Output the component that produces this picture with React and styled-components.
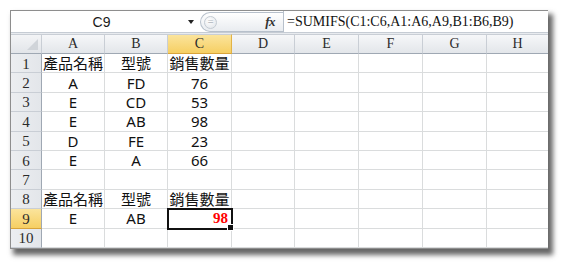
import React from "react";
import styled, { createGlobalStyle } from "styled-components";

const Global = createGlobalStyle`
  html, body { margin: 0; padding: 0; background: #ffffff; }
  #root { width: 567px; height: 268px; }
`;

const Page = styled.div`
  width: 567px;
  height: 268px;
  padding: 10px 0 0 10px;
  box-sizing: border-box;
`;

const Window = styled.div`
  width: 538px;
  height: 239px;
  box-sizing: border-box;
  border: 1px solid #8e8e8e;
  border-right: none;
  background: #ffffff;
  overflow: hidden;
  display: flex;
  flex-direction: column;
  box-shadow: 4px 5px 5px 1px rgba(0, 0, 0, 0.6);
`;

const FormulaBar = styled.div`
  height: 21px;
  display: flex;
  align-items: stretch;
  border-bottom: 1px solid #c6ccd4;
  flex: none;
`;

const NameBox = styled.div`
  width: 189px;
  position: relative;
  display: flex;
  align-items: center;
  justify-content: center;
  font-family: "Liberation Sans", "DejaVu Sans", sans-serif;
  font-size: 14px;
  color: #1a1a1a;
  padding-right: 8px;
  box-sizing: border-box;
`;

const DropArrow = styled.span`
  position: absolute;
  right: 6px;
  top: 9px;
  width: 0;
  height: 0;
  border-left: 3px solid transparent;
  border-right: 3px solid transparent;
  border-top: 4px solid #222;
`;

const FxArea = styled.div`
  width: 83px;
  display: flex;
  align-items: center;
  border: 1px solid #b7c0cb;
  border-right: none;
  border-radius: 11px 0 0 11px;
  background: linear-gradient(#ffffff, #e9ecf0);
  box-sizing: border-box;
  margin: 1px 0 0 0;
  padding-left: 3px;
`;

const EqCircle = styled.span`
  width: 11px;
  height: 11px;
  border-radius: 50%;
  border: 1px solid #c4cbd3;
  background: radial-gradient(circle at 40% 35%, #ffffff, #dfe3e8);
  display: flex;
  align-items: center;
  justify-content: center;
  font-size: 8px;
  line-height: 1;
  color: #b0b6bd;
  font-family: "DejaVu Sans", sans-serif;
`;

const FxLabel = styled.span`
  margin-left: auto;
  margin-right: 8px;
  font-family: "Liberation Serif", "DejaVu Serif", serif;
  font-style: italic;
  font-weight: bold;
  font-size: 13px;
  color: #333;
  letter-spacing: -0.5px;
`;

const FormulaInput = styled.div`
  flex: 1;
  border-left: 1px solid #b7c0cb;
  display: flex;
  align-items: center;
  padding-left: 3px;
  font-family: "Liberation Serif", "DejaVu Serif", serif;
  font-size: 14px;
  color: #111;
  white-space: nowrap;
`;

const Gap = styled.div`
  height: 1px;
  background: #e8ebef;
  flex: none;
`;

const Sheet = styled.div`
  flex: 1;
  min-height: 0;
  display: grid;
  grid-template-columns: 31px 63px 63px 64px 63px 64px 64px 64px 62px;
  grid-template-rows: 20px repeat(10, minmax(0, 1fr));
`;

const Corner = styled.div`
  background: linear-gradient(#f3f4f6, #e2e5e9);
  border-right: 1px solid #c9ced5;
  border-bottom: 1px solid #9fa8b3;
  border-top: 1px solid #c9ced5;
  position: relative;
  box-sizing: border-box;
  &::after {
    content: "";
    position: absolute;
    right: 3px;
    bottom: 3px;
    width: 0;
    height: 0;
    border-left: 11px solid transparent;
    border-bottom: 11px solid #d0d4d9;
  }
`;

const ColHead = styled.div`
  box-sizing: border-box;
  border-top: 1px solid #c9ced5;
  border-right: 1px solid ${(p) => (p.$active ? "#e2b347" : "#c9ced5")};
  border-bottom: 1px solid ${(p) => (p.$active ? "#d9a43a" : "#9fa8b3")};
  background: ${(p) =>
    p.$active
      ? "linear-gradient(#fbe49c, #f6cf63)"
      : "linear-gradient(#f6f7f9, #e3e6ea)"};
  display: flex;
  align-items: center;
  justify-content: center;
  font-family: "Liberation Serif", "DejaVu Serif", serif;
  font-size: 14px;
  line-height: 1;
  color: #2b2b2b;
`;

const RowHead = styled.div`
  box-sizing: border-box;
  min-height: 0;
  overflow: hidden;
  border-right: 1px solid #9fa8b3;
  border-bottom: 1px solid ${(p) => (p.$active ? "#d9a43a" : "#c9ced5")};
  background: ${(p) =>
    p.$active
      ? "linear-gradient(#fbe49c, #f6cf63)"
      : "linear-gradient(90deg, #eceef1, #e3e6ea)"};
  display: flex;
  align-items: center;
  justify-content: center;
  font-family: "Liberation Serif", "DejaVu Serif", serif;
  font-size: 15px;
  line-height: 1;
  color: #2b2b2b;
  padding-top: 2px;
`;

const Cell = styled.div`
  box-sizing: border-box;
  min-height: 0;
  border-right: 1px solid #dadcdd;
  border-bottom: 1px solid #dadcdd;
  display: flex;
  align-items: center;
  justify-content: center;
  font-family: "Noto Sans", "Noto Sans CJK TC", sans-serif;
  font-size: 15px;
  line-height: 1;
  color: #111;
  white-space: nowrap;
  padding-top: 1px;
`;

const ActiveCell = styled(Cell)`
  position: relative;
  justify-content: flex-end;
  padding-right: 3px;
  outline: 2px solid #111;
  outline-offset: -1px;
  z-index: 1;
  font-family: "Liberation Serif", "DejaVu Serif", serif;
  font-weight: bold;
  font-size: 15px;
  color: #ff0000;
  &::after {
    content: "";
    position: absolute;
    right: -3px;
    bottom: -3px;
    width: 5px;
    height: 5px;
    background: #111;
    border: 1px solid #fff;
  }
`;

const cols = ["A", "B", "C", "D", "E", "F", "G", "H"];
const rows = [
  ["產品名稱", "型號", "銷售數量"],
  ["A", "FD", "76"],
  ["E", "CD", "53"],
  ["E", "AB", "98"],
  ["D", "FE", "23"],
  ["E", "A", "66"],
  ["", "", ""],
  ["產品名稱", "型號", "銷售數量"],
  ["E", "AB", "98"],
  ["", "", ""],
];

export default function App() {
  return (
    <>
      <Global />
      <Page>
        <Window>
          <FormulaBar>
            <NameBox>
              C9
              <DropArrow />
            </NameBox>
            <FxArea>
              <EqCircle>=</EqCircle>
              <FxLabel>fx</FxLabel>
            </FxArea>
            <FormulaInput>=SUMIFS(C1:C6,A1:A6,A9,B1:B6,B9)</FormulaInput>
          </FormulaBar>
          <Gap />
          <Sheet>
            <Corner />
            {cols.map((c) => (
              <ColHead key={c} $active={c === "C"}>
                {c}
              </ColHead>
            ))}
            {rows.map((r, ri) => (
              <React.Fragment key={ri}>
                <RowHead $active={ri === 8}>{ri + 1}</RowHead>
                {cols.map((c, ci) => {
                  if (ri === 8 && ci === 2) {
                    return <ActiveCell key={c}>98</ActiveCell>;
                  }
                  return <Cell key={c}>{ci < 3 ? r[ci] : ""}</Cell>;
                })}
              </React.Fragment>
            ))}
          </Sheet>
        </Window>
      </Page>
    </>
  );
}
